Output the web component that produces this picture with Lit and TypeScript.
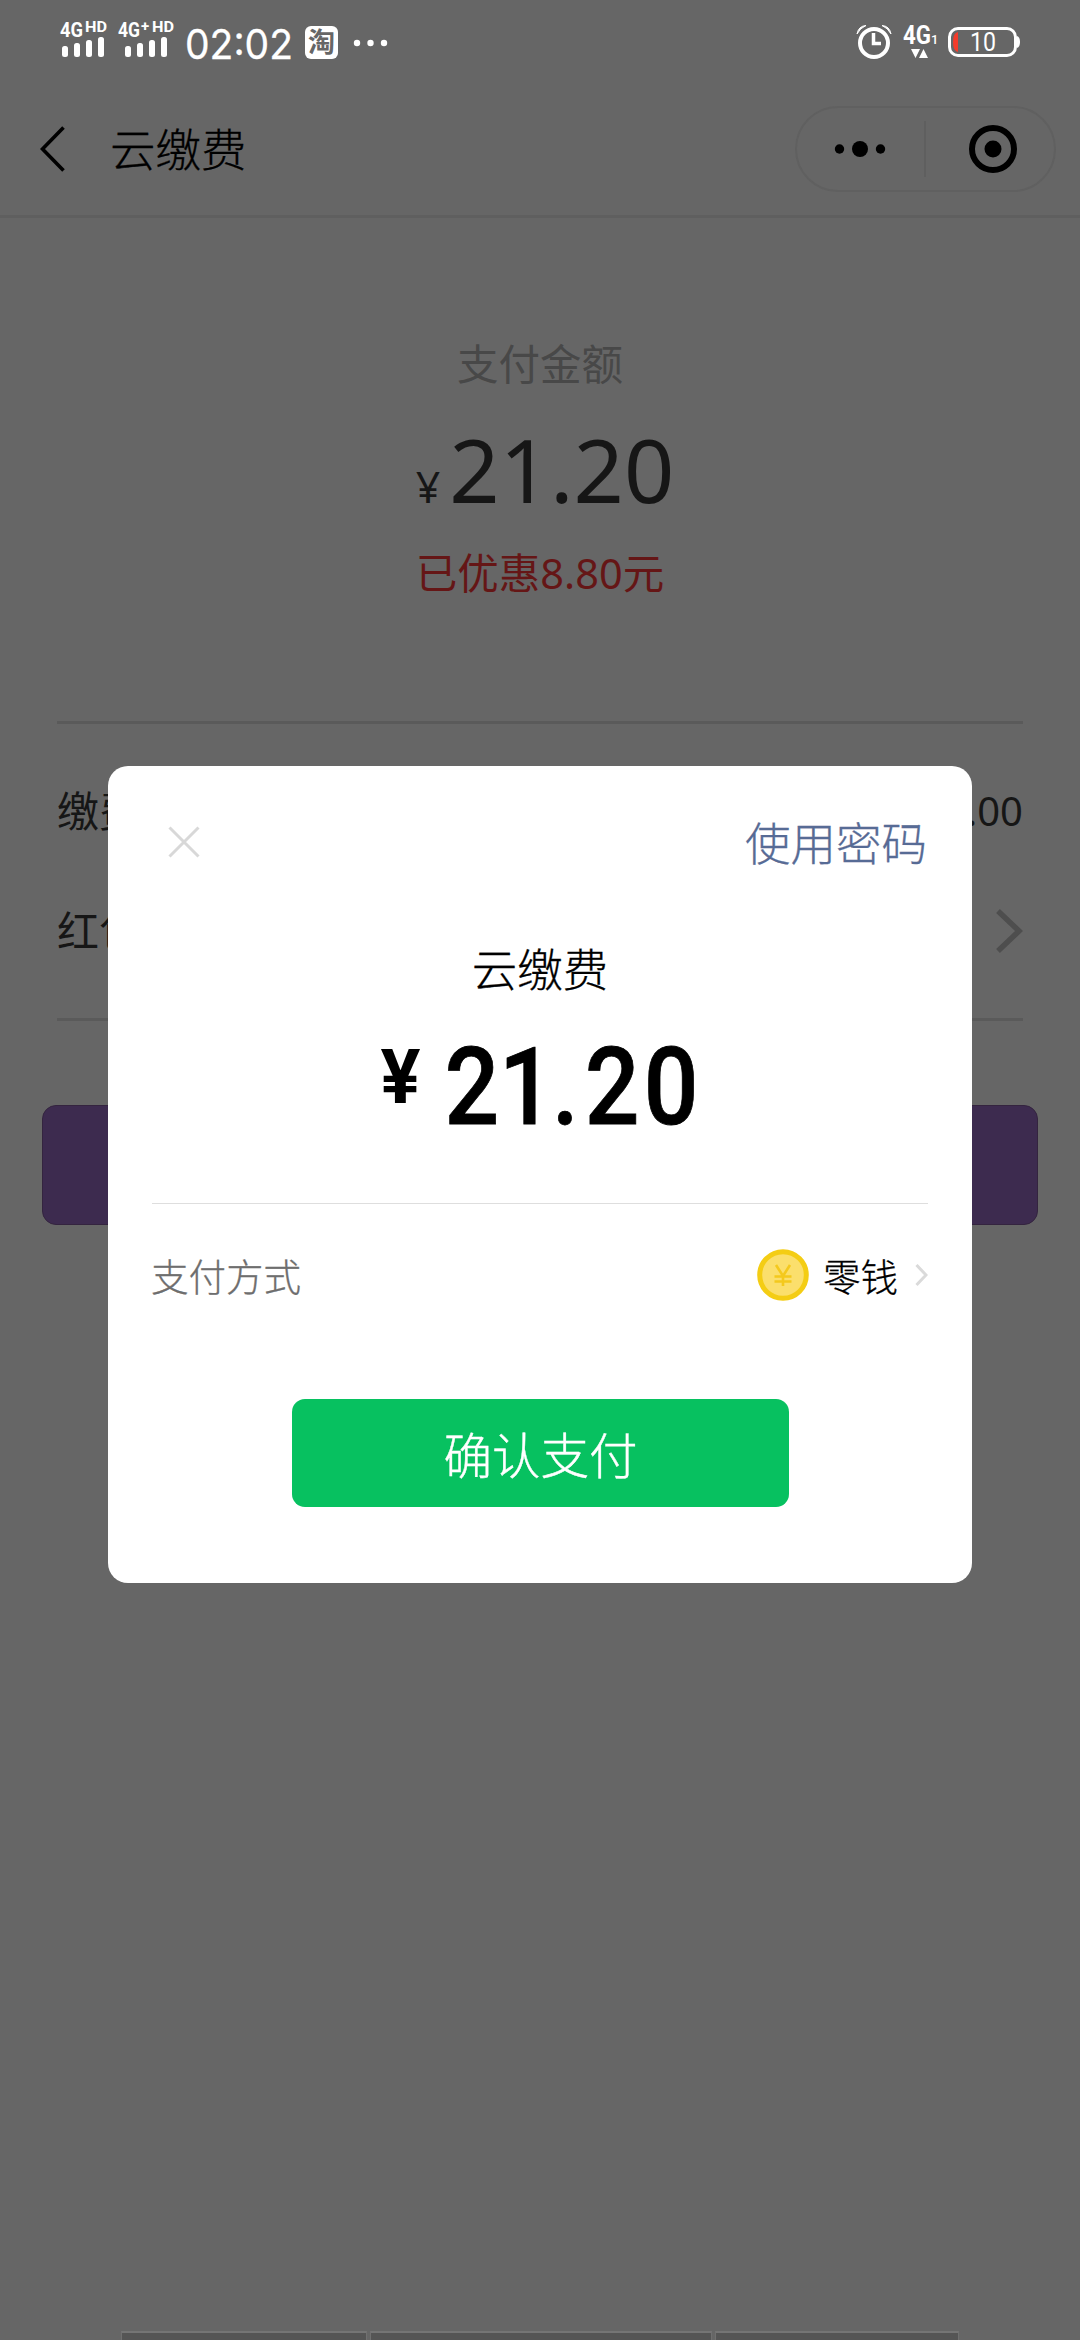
import { LitElement, html, css, svg } from "lit";
import { customElement } from "lit/decorators.js";

@customElement("status-bar")
class StatusBar extends LitElement {
  static styles = css`
    :host { display: block; height: 80px; }
    svg { display: block; }
    .gen { font: 700 20px Roboto, sans-serif; fill: #fff; }
    .hd { font: 700 14px Roboto, sans-serif; fill: #fff; }
    .plus { font: 700 15px Roboto, sans-serif; fill: #fff; }
    .time { font: 400 41px Inter, sans-serif; fill: #fff; stroke: #fff; stroke-width: 0.3px; }
    .tb { font: 700 27px "Noto Sans CJK SC", sans-serif; fill: #666; }
    .net { font: 700 25px Roboto, sans-serif; fill: #fff; }
    .sub { font: 500 13px Roboto, sans-serif; fill: #fff; }
    .bat { font: 400 25px Roboto, sans-serif; fill: #fff; }
  `;

  private bars(x: number) {
    return [11, 14, 17, 20].map(
      (h, i) => svg`<rect x=${x + i * 12} y=${57 - h} width="6" height=${h} rx="2.5" fill="#fff"/>`
    );
  }

  render() {
    return html`<svg width="1080" height="80" viewBox="0 0 1080 80">
      <text class="gen" x="60" y="36.500" textLength="23" lengthAdjust="spacingAndGlyphs">4G</text>
      <text class="hd" x="85" y="32" textLength="22" lengthAdjust="spacingAndGlyphs">HD</text>
      ${this.bars(62)}
      <text class="gen" x="118" y="36.500" textLength="22" lengthAdjust="spacingAndGlyphs">4G</text>
      <text class="plus" x="141" y="31">+</text>
      <text class="hd" x="152" y="32" textLength="22" lengthAdjust="spacingAndGlyphs">HD</text>
      ${this.bars(125)}
      <text class="time" x="185" y="59" textLength="108" lengthAdjust="spacingAndGlyphs">02:02</text>
      <rect x="305" y="26" width="33" height="33" rx="6" fill="#fff"/>
      <text class="tb" x="308" y="52">淘</text>
      <circle cx="357" cy="43" r="3.2" fill="#fff"/>
      <circle cx="370.500" cy="43" r="3.2" fill="#fff"/>
      <circle cx="384" cy="43" r="3.2" fill="#fff"/>
      <circle cx="874" cy="43" r="14" fill="none" stroke="#fff" stroke-width="4"/>
      <path d="M873.500 33v10.500h7.500" fill="none" stroke="#fff" stroke-width="3.500"/>
      <path d="M857 34q1.500-8 9-8.500q-6 2.500-9 8.500zM891 34q-1.500-8-9-8.500q6 2.500 9 8.500z" fill="#fff" stroke="#fff" stroke-width="1"/>
      <text class="net" x="903" y="44" textLength="28" lengthAdjust="spacingAndGlyphs">4G</text>
      <text class="sub" x="931" y="44">1</text>
      <path d="M911 49h9l-4.500 9zM919 58h9l-4.500-9z" fill="#fff"/>
      <rect x="949.500" y="28.500" width="66" height="27" rx="8.500" fill="none" stroke="#fff" stroke-width="3"/>
      <path d="M958 32v20q-5-1-5-10t5-10z" fill="#f43b2a"/>
      <path d="M1017 36q3 1 3 6t-3 6z" fill="#fff"/>
      <text class="bat" x="970" y="51" textLength="26" lengthAdjust="spacingAndGlyphs">10</text>
    </svg>`;
  }
}

@customElement("nav-bar")
class NavBar extends LitElement {
  static styles = css`
    :host { display: flex; align-items: center; height: 138px; box-sizing: border-box;
      padding: 0 24px 0 40px; border-bottom: 3px solid #5f5f5f; }
    .back { width: 26px; height: 46px; display: block; margin-top: 3px; }
    .title { font: 300 45.500px/60px "Noto Sans CJK SC", sans-serif; color: #000; margin: -1px 0 0 44px; flex: 1;
      -webkit-text-stroke: 0.3px #000; }
    .capsule { width: 261px; height: 86px; box-sizing: border-box; border: 2px solid #606060; border-radius: 43px; margin-top: 2px; }
    .capsule svg { display: block; margin: -2px; }
  `;
  render() {
    return html`
      <svg class="back" viewBox="0 0 26 46"><path d="M23.500 1.500L2.500 23l21 21.500" fill="none" stroke="#000" stroke-width="3.600"/></svg>
      <div class="title">云缴费</div>
      <div class="capsule"><svg width="261" height="86" viewBox="0 0 261 86">
        <circle cx="44.500" cy="43" r="4.700"/><circle cx="65" cy="43" r="8"/><circle cx="85.500" cy="43" r="4.700"/>
        <path d="M130 15v56" stroke="#5e5e5e" stroke-width="1.500"/>
        <circle cx="198" cy="43" r="21" fill="none" stroke="#000" stroke-width="6"/><circle cx="198" cy="43" r="8.500"/>
      </svg></div>`;
  }
}

@customElement("pay-dialog")
class PayDialog extends LitElement {
  static styles = css`
    :host { display: flex; flex-direction: column; box-sizing: border-box; width: 864px; height: 817px;
      padding: 0 44px; background: #fff; border-radius: 20px; color: #000;
      font-family: "Noto Sans CJK SC", sans-serif; font-weight: 300; -webkit-text-stroke: 0.3px; }
    .head { display: flex; justify-content: space-between; align-items: center; height: 60px; margin-top: 42px; padding: 0 1px 0 16px; }
    .close { display: block; width: 32px; height: 32px; margin-top: 7px; }
    .pwd { font-size: 45.500px; line-height: 60px; color: #576b95; margin-top: 5px; }
    .name { text-align: center; font-size: 45.500px; line-height: 60px; margin-top: 69px; }
    .sum { display: block; width: 350px; height: 140px; margin: 17px 0 0 219px; overflow: visible; -webkit-text-stroke: 0; }
    .yen { font: 700 76px Roboto, sans-serif; }
    .num { font: 500 107px Roboto, sans-serif; stroke: #000; stroke-width: 0.8px; }
    .line { height: 1px; background: #dedede; margin-top: 49px; }
    .method { display: flex; align-items: center; height: 60px; margin-top: 41px; font-size: 37.500px; line-height: 60px; }
    .label { flex: 1; color: #6e6e6e; margin-left: -1px; }
    .coin { width: 52px; height: 52px; margin-right: 14px; }
    .arrow { width: 13px; height: 24px; margin-left: 17px; }
    .ok { width: 497px; height: 108px; margin: 94px 0 0 140px; border: 0; padding: 0; border-radius: 13px; background: #07c160;
      color: #fff; font: 300 48.500px/108px "Noto Sans CJK SC", sans-serif; -webkit-text-stroke: 0.4px; }
  `;
  render() {
    return html`
      <div class="head">
        <svg class="close" viewBox="0 0 32 32"><path d="M1.500 1.500l29 29M30.500 1.500l-29 29" stroke="#d8d8d8" stroke-width="3"/></svg>
        <div class="pwd">使用密码</div>
      </div>
      <div class="name">云缴费</div>
      <svg class="sum" viewBox="-10 -10 350 140">
        <text class="yen" x="-0.500" y="78.500" textLength="40" lengthAdjust="spacingAndGlyphs">¥</text>
        <text class="num" transform="scale(0.9 1)" x="70.500 131 190 226.500 292" y="99.700">21.20</text>
      </svg>
      <div class="line"></div>
      <div class="method">
        <span class="label">支付方式</span>
        <svg class="coin" viewBox="0 0 52 52">
          <circle cx="26" cy="26" r="23.300" fill="#fbdf6c" stroke="#f4cd14" stroke-width="5"/>
          <path d="M19 16l7 11 7-11M17.500 27.500h17M17.500 32.500h17M26 27v10" fill="none" stroke="#f4c91d" stroke-width="2.600"/>
        </svg>
        <span>零钱</span>
        <svg class="arrow" viewBox="0 0 13 24"><path d="M1.500 2l9.500 10-9.500 10" fill="none" stroke="#dadada" stroke-width="3"/></svg>
      </div>
      <button class="ok">确认支付</button>`;
  }
}

@customElement("app-root")
class AppRoot extends LitElement {
  static styles = css`
    :host { display: block; position: relative; width: 1080px; height: 2340px; overflow: hidden; background: #666;
      color: #161616; font-family: "Noto Sans", "Noto Sans CJK SC", sans-serif; }
    .page { display: flex; flex-direction: column; height: 2340px; }
    .amount { display: flex; flex-direction: column; align-items: center; height: 503px; }
    .cap { font-size: 41.500px; line-height: 60px; color: #484848; margin-top: 116px; }
    .big { display: flex; align-items: baseline; gap: 9px; line-height: 120px; margin-top: 15px; padding-left: 10px; }
    .yen { font-size: 43px; line-height: 1; }
    .num { font-size: 88px; }
    .off { font-size: 41.500px; line-height: 60px; color: #651616; margin-top: 14px; }
    .rows { margin: 0 57px; height: 300px; box-sizing: border-box; border-top: 3px solid #5a5a5a; border-bottom: 3px solid #5a5a5a; }
    .row { display: flex; justify-content: space-between; align-items: center; font-size: 42px; line-height: 60px; }
    .fee { margin-top: 57px; }
    .value { font-size: 40px; }
    .bag { margin-top: 60px; }
    .chev { width: 27px; height: 46px; }
    .pay { margin: 84px 42px 0; height: 120px; box-sizing: border-box; border: 1px solid #34243f; border-radius: 14px; background: #3d2b4f; }
    .keys { display: grid; grid-template-columns: 246px 342px 244px; gap: 3px; margin: auto 121px 0; height: 9px; }
    .key { background: #555; border-top: 2px solid #757575; border-left: 1px solid #707070; border-right: 1px solid #707070; }
    .modal { position: absolute; left: 108px; top: 766px; }
  `;
  render() {
    return html`
      <div class="page">
        <status-bar></status-bar>
        <nav-bar></nav-bar>
        <div class="amount">
          <div class="cap">支付金额</div>
          <div class="big"><span class="yen">¥</span><span class="num">21.20</span></div>
          <div class="off">已优惠8.80元</div>
        </div>
        <div class="rows">
          <div class="row fee"><span>缴费</span><span class="value">.00</span></div>
          <div class="row bag"><span>红包</span>
            <svg class="chev" viewBox="0 0 27 46"><path d="M2 3l21 20L2 43" fill="none" stroke="#4e4e4e" stroke-width="5.500"/></svg>
          </div>
        </div>
        <div class="pay"></div>
        <div class="keys"><i class="key"></i><i class="key"></i><i class="key"></i></div>
      </div>
      <pay-dialog class="modal"></pay-dialog>`;
  }
}
